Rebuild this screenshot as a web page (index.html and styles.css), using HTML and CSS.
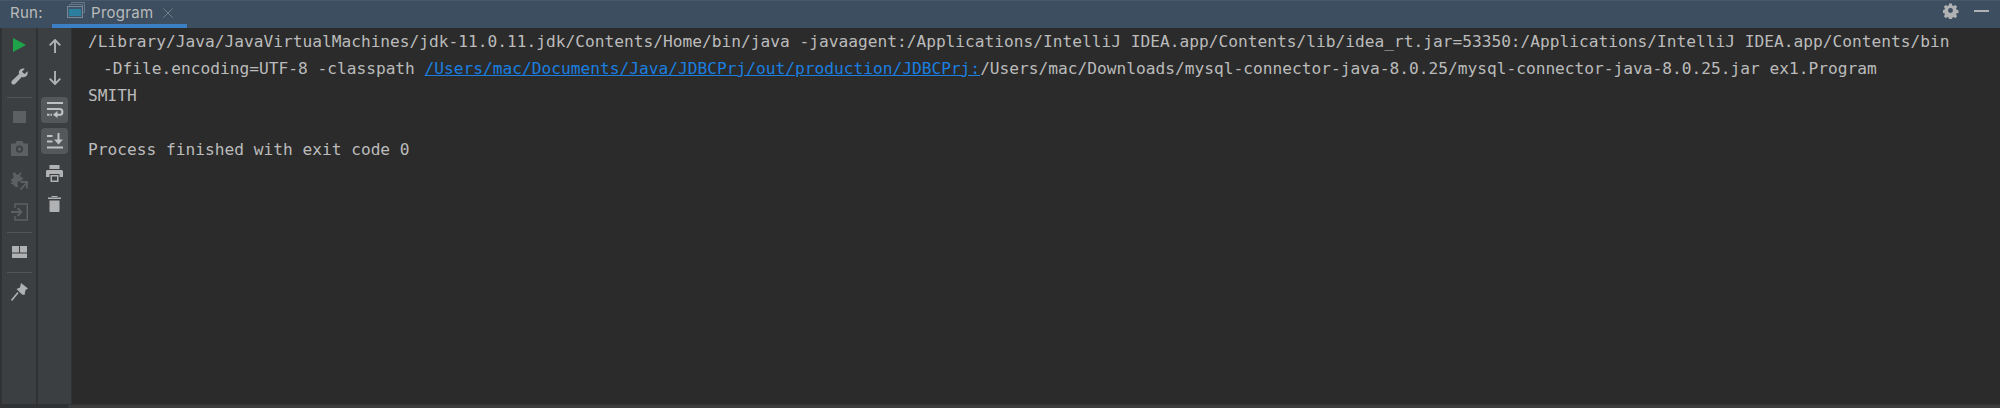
FILE: index.html
```html
<!DOCTYPE html>
<html lang="en">
<head>
<meta charset="utf-8">
<title>Run</title>
<link rel="stylesheet" href="styles.css">
</head>
<body>
<div class="window">
  <header class="titlebar">
    <span class="run-label">Run:</span>
    <div class="tab">
      <svg class="tab-icon" width="18" height="16" viewBox="0 0 18 16"><path d="M4.500 1.500V.5H17.500V10.500H16M2.500 3.500V2.500H15.500V4" fill="none" stroke="#66798a"/><rect x=".5" y="4.500" width="15" height="11" fill="#3f5666" stroke="#76889a"/><rect x="2" y="7" width="12" height="7" fill="#2c7f9e"/></svg>
      <span class="tab-name">Program</span>
      <svg class="tab-close" width="10" height="10" viewBox="0 0 10 10"><path d="M.5 .5L9.500 9.500M9.500 .5L.5 9.500" stroke="#6f7f8b" stroke-width="1"/></svg>
    </div>
    <div class="title-actions">
      <svg width="16" height="16" viewBox="0 0 16 16"><path fill-rule="evenodd" fill="#afb1b3" d="M6.500 .5h3l.4 2.100 1.300.6 1.800-1.200 2.100 2.100-1.200 1.800.6 1.300 2 .4v3l-2 .4-.6 1.300 1.200 1.800-2.100 2.100-1.800-1.200-1.300.6-.4 2h-3l-.4-2-1.300-.6-1.800 1.200-2.100-2.100 1.200-1.800-.6-1.300-2-.4v-3l2-.4.6-1.300-1.200-1.800 2.100-2.100 1.800 1.200 1.300-.6zM8 5.400a2.600 2.600 0 1 0 0 5.200 2.600 2.600 0 0 0 0-5.200z" transform="scale(.94)"/></svg>
      <span class="minimize"></span>
    </div>
  </header>
  <div class="body">
    <aside class="rail rail-main">
      <svg class="ico i-play" width="13" height="14" viewBox="0 0 13 14"><path d="M0 0L13 7L0 14Z" fill="#1fa34a"/></svg>
      <svg class="ico i-wrench" width="17" height="17" viewBox="0 0 17 17"><path d="M16.500 3.300L13.500 6L11 3.800L13.700 .8C11.500 -.2 8.700 1 8 3.300C7.700 4.300 7.800 5.300 8.100 6.100L1 12.800C0 13.800 .2 15 1 15.900C1.900 16.800 3.200 16.800 4.100 16L10.800 9C13 9.800 15.500 8.800 16.400 6.500C16.700 5.600 16.800 4.200 16.500 3.300Z" fill="#afb1b3"/></svg>
      <span class="sep s-first"></span>
      <span class="stop"></span>
      <svg class="ico i-camera" width="17" height="15" viewBox="0 0 17 15"><path fill-rule="evenodd" d="M5.500 0H11.500L12.500 2.500H17V15H0V2.500H4.500ZM8.500 4.500A3.600 3.600 0 1 0 8.500 11.700A3.600 3.600 0 0 0 8.500 4.500ZM8.500 6.200A1.900 1.900 0 1 1 8.500 10A1.900 1.900 0 0 1 8.500 6.200Z" fill="#5d6063"/></svg>
      <svg class="ico i-bug" width="17" height="18" viewBox="0 0 17 18"><path d="M3.500 0L5.500 2.500H7.500L9.500 0L10.500 1L9 3.500L10 5.500H12V7.500H10.500V9H8L6.500 10.500V13L7.500 15H5.500C3.500 15 2.200 13.500 1.800 12H0V10.500H1.200V9H0V7H1.800L2.600 4.500L1.500 1.500Z" fill="#5d6063"/><path d="M9.500 10H16V16.500M16 10.500L9.500 17.500" fill="none" stroke="#5d6063" stroke-width="1.800"/></svg>
      <svg class="ico i-login" width="17" height="18" viewBox="0 0 17 18"><path d="M4 5V1H16.250V17H4V13" fill="none" stroke="#5d6063" stroke-width="1.500"/><path d="M0 9H10M6.500 5L10.500 9L6.500 13" fill="none" stroke="#5d6063" stroke-width="1.800"/></svg>
      <span class="sep s-second"></span>
      <svg class="ico i-layout" width="15" height="12" viewBox="0 0 15 12"><path d="M0 0H7V6.500H0ZM8 0H15V6.500H8ZM0 7.500H15V12H0Z" fill="#afb1b3"/></svg>
      <span class="sep s-third"></span>
      <svg class="ico i-pin" width="17" height="18" viewBox="0 0 17 18"><path d="M10 0L17 5.500L14.500 7L13.500 12L11 11.500L5.500 6L9 4.500Z" fill="#afb1b3"/><path d="M7 9.500L.5 17.500" stroke="#afb1b3" stroke-width="1.600" fill="none"/></svg>
    </aside>
    <aside class="rail rail-sub">
      <svg class="ico" width="12" height="14" viewBox="0 0 12 14"><path d="M6 1V14M.7 6.300L6 1L11.300 6.300" fill="none" stroke="#afb1b3" stroke-width="1.900"/></svg>
      <svg class="ico i-down" width="12" height="14" viewBox="0 0 12 14"><path d="M6 0V13M.7 7.700L6 13L11.300 7.700" fill="none" stroke="#afb1b3" stroke-width="1.900"/></svg>
      <span class="toggle t-wrap">
        <svg width="18" height="16" viewBox="0 0 18 16"><path d="M1 1H17M1 7H13.500A2.900 2.900 0 0 1 13.500 12.800H8" fill="none" stroke="#bfc1c3" stroke-width="2"/><path d="M11.500 8.800L7 12.800L11.500 16Z" fill="#bfc1c3"/><path d="M1 11.800H3.500V13.800H1ZM4.500 11.800H6V13.800H4.500Z" fill="#bfc1c3"/></svg>
      </span>
      <span class="toggle t-scroll">
        <svg width="18" height="16" viewBox="0 0 18 16"><path d="M1 3H6.500M1 8.500H6.500M1 14.500H17M12.500 0V8" fill="none" stroke="#bfc1c3" stroke-width="2"/><path d="M8 6.500H17L12.500 11.500Z" fill="#bfc1c3"/></svg>
      </span>
      <svg class="ico i-print" width="17" height="17" viewBox="0 0 17 17"><path fill-rule="evenodd" d="M3.500 0H13.500V4H3.500ZM1.500 5H15.500C16.300 5 17 5.700 17 6.500V12H13.500V9H3.500V12H0V6.500C0 5.700 .7 5 1.500 5ZM4.500 10H12.500V17H4.500ZM6 11.500V15.500H11V11.500Z" fill="#afb1b3"/></svg>
      <svg class="ico i-trash" width="13" height="16" viewBox="0 0 13 16"><path d="M0 1.500H13V3H0ZM1.500 4.500H11.500V15C11.500 15.600 11 16 10.500 16H2.500C2 16 1.500 15.600 1.500 15ZM3.500 0H9.500V1H3.500Z" fill="#afb1b3"/></svg>
    </aside>
    <main class="console">
      <div class="line">/Library/Java/JavaVirtualMachines/jdk-11.0.11.jdk/Contents/Home/bin/java -javaagent:/Applications/IntelliJ IDEA.app/Contents/lib/idea_rt.jar=53350:/Applications/IntelliJ IDEA.app/Contents/bin</div>
      <div class="line wrapped">-Dfile.encoding=UTF-8 -classpath <a class="path">/Users/mac/Documents/Java/JDBCPrj/out/production/JDBCPrj:</a>/Users/mac/Downloads/mysql-connector-java-8.0.25/mysql-connector-java-8.0.25.jar ex1.Program</div>
      <div class="line">SMITH</div>
      <div class="line">&nbsp;</div>
      <div class="line">Process finished with exit code 0</div>
    </main>
  </div>
  <div class="scrollbar"><span class="scroll-thumb"></span></div>
</div>
</body>
</html>
```
FILE: styles.css
```css
* { box-sizing: border-box; }
html, body { margin: 0; padding: 0; background: #2b2b2b; }
.window {
  width: 2000px;
  height: 408px;
  display: flex;
  flex-direction: column;
  overflow: hidden;
  font-family: "Inter", "Liberation Sans", sans-serif;
}
.titlebar {
  height: 28px;
  flex: none;
  display: flex;
  align-items: flex-start;
  background: #3c4e5f;
  border-top: 1px solid #46586a;
  color: #bbbbbb;
  font-size: 15px;
  letter-spacing: 0.3px;
}
.run-label { width: 52px; padding: 2px 0 0 10px; }
.tab {
  width: 135px;
  height: 27px;
  display: flex;
  align-items: flex-start;
  padding-left: 15px;
  border-bottom: 4px solid #3b80c4;
}
.tab-icon { margin-top: 1px; }
.tab-name { margin-left: 6px; padding-top: 2px; }
.tab-close { margin: 7px 0 0 10px; }
.title-actions {
  margin-left: auto;
  display: flex;
  align-items: center;
  gap: 15px;
  padding: 2px 11px 0 0;
}
.minimize { width: 15px; height: 2px; background: #afb1b3; }
.body { flex: 1; display: flex; min-height: 0; }
.rail {
  flex: none;
  display: flex;
  flex-direction: column;
  align-items: center;
  background: #3c3f41;
  padding-top: 10px;
}
.rail-main { width: 38px; border-left: 2px solid #303234; border-right: 2px solid #303234; }
.rail-sub { width: 34px; padding-top: 11px; border-right: 1px solid #303234; }
.ico { flex: none; }
.sep { width: 25px; height: 1px; background: #515355; flex: none; }
.stop { width: 13px; height: 12px; background: #5d6063; flex: none; margin-top: 13px; }
.i-wrench { margin-top: 16px; }
.s-first { margin-top: 12px; }
.i-camera { margin-top: 18px; }
.i-bug { margin-top: 16px; }
.i-login { margin-top: 13px; }
.s-second { margin-top: 11px; }
.i-layout { margin-top: 13px; }
.s-third { margin-top: 14px; }
.i-pin { margin-top: 10px; }
.i-down { margin-top: 18px; }
.toggle {
  width: 27px;
  height: 26px;
  display: flex;
  align-items: center;
  justify-content: center;
  border-radius: 4px;
  background: #55585a;
  flex: none;
}
.t-wrap { margin-top: 12px; }
.t-scroll { margin-top: 5px; }
.i-print { margin-top: 11px; }
.i-trash { margin-top: 14px; }
.console {
  flex: 1;
  min-width: 0;
  padding: 0 0 0 16px;
  background: #2b2b2b;
  color: #bbbbbb;
  font-family: "DejaVu Sans Mono", "Liberation Mono", monospace;
  font-size: 16.2px;
  line-height: 27px;
}
.line { white-space: pre; height: 27px; }
.wrapped { padding-left: 15px; }
.path { color: #1a7fe0; text-decoration: underline; }
.scrollbar {
  height: 4px;
  flex: none;
  background: #2f3132;
  border-top: 1px solid #323232;
  display: flex;
  padding-left: 68px;
}
.scroll-thumb { flex: 1; background: #3a3c3d; }
```
